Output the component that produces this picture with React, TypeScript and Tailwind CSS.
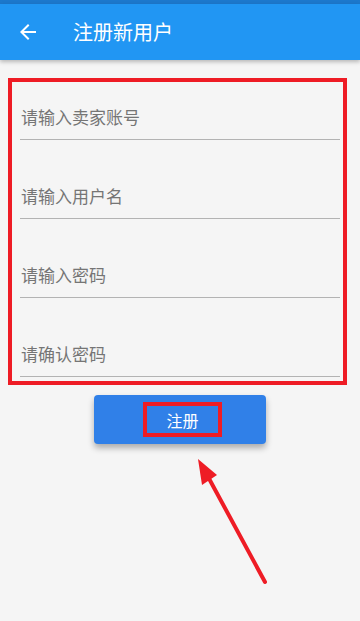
const fields = ["请输入卖家账号", "请输入用户名", "请输入密码", "请确认密码"];

const App = () => {
  return (
    <div
      className="relative w-[360px] h-[621px] bg-[#f5f5f5] overflow-hidden"
      style={{ fontFamily: '"Noto Sans CJK SC", "Noto Sans", sans-serif' }}
    >
      <div className="h-[4px] bg-[#1c78cc]" />
      <header className="relative z-10 h-[56px] bg-[#2196f3] flex items-center shadow-[0_2px_4px_rgba(0,0,0,0.25)]">
        <div className="w-[24px] h-[24px] ml-[16px]">
          <svg viewBox="0 0 24 24" width="24" height="24" fill="#ffffff">
            <path d="M20 11H7.83l5.59-5.59L12 4l-8 8 8 8 1.41-1.41L7.83 13H20v-2z" />
          </svg>
        </div>
        <h1 className="ml-[33px] text-[20px] leading-[28px] text-white">注册新用户</h1>
      </header>

      <div className="ml-[8px] mt-[18px] w-[339px] border-4 border-[#ee1c25] pl-[8px] pr-[3px] pb-[4px]">
        {fields.map((f, i) => (
          <div
            key={f}
            className={`${i === 0 ? "pt-[23px]" : "pt-[44px]"} pb-[10px] border-b border-[#b3b3b3]`}
          >
            <span className="block pl-[1px] text-[17px] leading-[24px] text-[#757575]">{f}</span>
          </div>
        ))}
      </div>

      <div className="flex justify-center mt-[10px]">
        <button className="w-[172px] h-[49px] rounded-[4px] bg-[#3080e8] flex items-center justify-center shadow-[0_4px_6px_rgba(0,0,0,0.3)]">
          <span className="ml-[5px] w-[79px] h-[35px] border-4 border-[#ee1c25] flex items-center justify-center text-[16px] text-white">
            注册
          </span>
        </button>
      </div>

      <svg
        className="absolute left-0 top-0 pointer-events-none"
        width="360"
        height="621"
        viewBox="0 0 360 621"
      >
        <line x1="265" y1="582" x2="206" y2="473" stroke="#ee1c25" strokeWidth="4" strokeLinecap="round" />
        <polygon points="198,459 202,485 217,475" fill="#ee1c25" />
      </svg>
    </div>
  );
};

export default App;
